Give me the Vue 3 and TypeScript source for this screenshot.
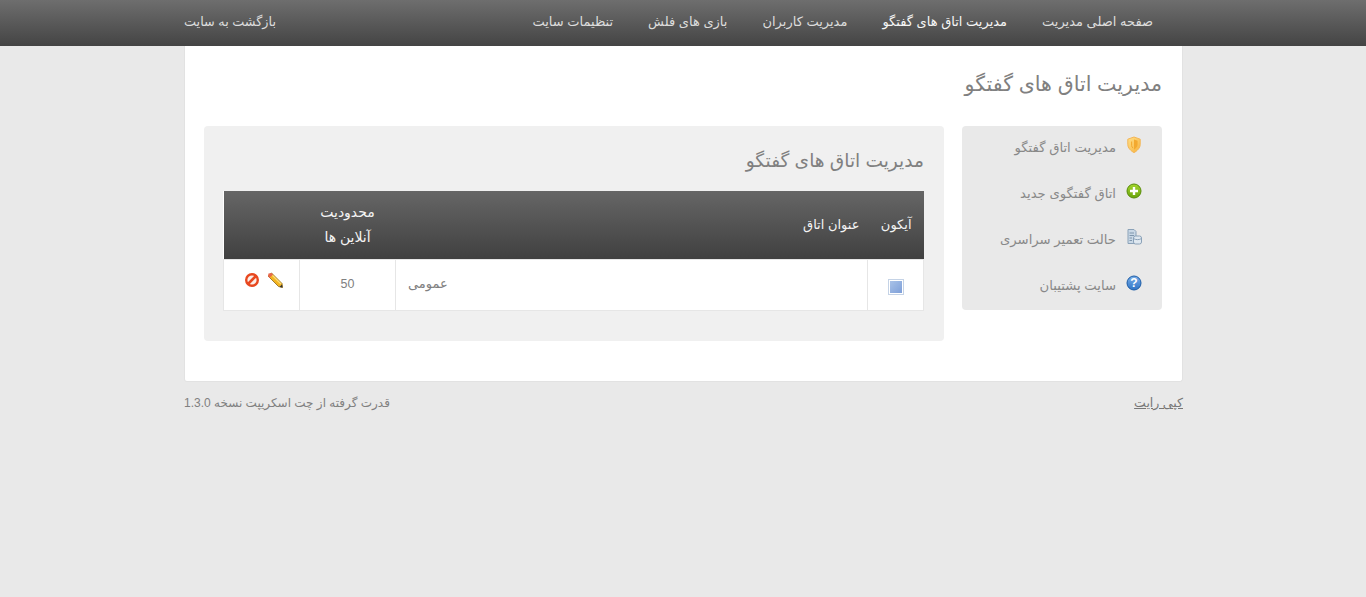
<script setup lang="ts">
const navItems = [
  { label: 'صفحه اصلی مدیریت', active: false },
  { label: 'مدیریت اتاق های گفتگو', active: true },
  { label: 'مدیریت کاربران', active: false },
  { label: 'بازی های فلش', active: false },
  { label: 'تنظیمات سایت', active: false },
]
const sideItems = [
  { label: 'مدیریت اتاق گفتگو', icon: 'shield' },
  { label: 'اتاق گفتگوی جدید', icon: 'plus' },
  { label: 'حالت تعمیر سراسری', icon: 'server' },
  { label: 'سایت پشتیبان', icon: 'help' },
]
</script>

<template>
  <div class="page" dir="rtl">
    <header class="topbar">
      <div class="wrap topbar-in">
        <nav class="nav">
          <a v-for="n in navItems" :key="n.label" :class="{ on: n.active }">{{ n.label }}</a>
        </nav>
        <a class="back">بازگشت به سایت</a>
      </div>
    </header>

    <div class="wrap">
      <main class="card">
        <h1>مدیریت اتاق های گفتگو</h1>
        <div class="cols">
          <aside class="side">
            <a v-for="s in sideItems" :key="s.label" class="side-item">
              <svg class="ico" width="16" height="18" viewBox="0 0 16 18">
                <defs>
                  <linearGradient id="g-green" x1="0" y1="0" x2="0" y2="1">
                    <stop offset="0" stop-color="#a4d62c"/>
                    <stop offset="1" stop-color="#6aa30c"/>
                  </linearGradient>
                  <linearGradient id="g-blue" x1="0" y1="0" x2="0" y2="1">
                    <stop offset="0" stop-color="#79aee8"/>
                    <stop offset="1" stop-color="#2f74c6"/>
                  </linearGradient>
                  <linearGradient id="g-gold" x1="0" y1="0" x2="1" y2="1">
                    <stop offset="0" stop-color="#ffe08a"/>
                    <stop offset="1" stop-color="#f7b23b"/>
                  </linearGradient>
                </defs>
                <template v-if="s.icon === 'shield'">
                  <path d="M8 1 L14.2 3.2 V8.5 C14.2 12 11 15 8 16.6 C5 15 1.8 12 1.8 8.5 V3.2 Z" fill="url(#g-gold)" stroke="#f4b555" stroke-width="1"/>
                  <path d="M8 3.5 L11.6 4.8 V8.5 C11.6 10.8 9.6 12.6 8 13.8 Z" fill="#f3a92f"/>
                  <path d="M5.6 5.5 V9.5 C5.6 10.5 6.2 11.4 7 12.1" fill="none" stroke="#f3a92f"/>
                </template>
                <template v-else-if="s.icon === 'plus'">
                  <circle cx="8" cy="9" r="7" fill="url(#g-green)" stroke="#588c08" stroke-width="1"/>
                  <path d="M8 5 V13 M4 9 H12" stroke="#fff" stroke-width="2.4"/>
                </template>
                <template v-else-if="s.icon === 'server'">
                  <path d="M2 1.5 H8 L10 3.5 V15.5 H2 Z" fill="#c9d8e6" stroke="#8ba2b8"/>
                  <path d="M3.5 5 H8 M3.5 7.5 H8 M3.5 10 H6 M3.5 12.5 H6" stroke="#7f96ac"/>
                  <rect x="7.5" y="8" width="8" height="8" rx="2" fill="#dfe8f0" stroke="#8ba2b8"/>
                  <path d="M7.5 10.5 C9.5 12 13.5 12 15.5 10.5" fill="none" stroke="#8ba2b8"/>
                </template>
                <template v-else>
                  <circle cx="8" cy="9" r="7" fill="url(#g-blue)" stroke="#1c5ca6" stroke-width="1"/>
                  <text x="8" y="13.2" class="q">?</text>
                </template>
              </svg>
              <span>{{ s.label }}</span>
            </a>
          </aside>

          <section class="panel">
            <h2>مدیریت اتاق های گفتگو</h2>
            <table>
              <thead>
                <tr>
                  <th class="c-icon">آیکون</th>
                  <th class="c-title">عنوان اتاق</th>
                  <th class="c-limit">محدودیت آنلاین ها</th>
                  <th class="c-act"></th>
                </tr>
              </thead>
              <tbody>
                <tr>
                  <td class="center">
                    <span class="room-ico"></span>
                  </td>
                  <td class="name">عمومی</td>
                  <td class="center num">50</td>
                  <td class="actions">
                    <div class="acts">
                      <svg width="16" height="16" viewBox="0 0 16 16">
                        <path d="M4.5 1 L15 11.5 L15.5 15.5 L11.5 14.5 L1 4 Z" fill="#f3b41f" stroke="#8a6414" stroke-width="0.8"/>
                        <path d="M1 4 L1.5 1.5 L4.5 1 L6 2.5 L2.5 6 Z" fill="#e8694c"/>
                        <path d="M5.5 3.5 L14 12" stroke="#fbdc7a" stroke-width="1.2"/>
                        <path d="M12.5 15 L15 12.5 L15.5 15.5 Z" fill="#333"/>
                      </svg>
                      <svg width="16" height="16" viewBox="0 0 16 16">
                        <circle cx="8" cy="8" r="5.8" fill="#fbeee8" stroke="#e8481f" stroke-width="2.4"/>
                        <path d="M4 12 L12 4" stroke="#e8481f" stroke-width="2.6"/>
                      </svg>
                    </div>
                  </td>
                </tr>
              </tbody>
            </table>
          </section>
        </div>
      </main>

      <footer class="foot">
        <a class="copy">کپی رایت</a>
        <span>قدرت گرفته از چت اسکریپت نسخه 1.3.0</span>
      </footer>
    </div>
  </div>
</template>

<style>
html, body { margin: 0; background: #e9e9e9; }
</style>

<style scoped>
.page {
  min-height: 597px;
  background: #e9e9e9;
  color: #777;
  font: 13px/20px "Liberation Sans", "DejaVu Sans", sans-serif;
}
.wrap { width: 1000px; margin: 0 auto; padding-left: 1px; box-sizing: border-box; }
.topbar { height: 46px; background: linear-gradient(#6e6e6e, #444); }
.topbar-in { display: flex; justify-content: space-between; align-items: center; height: 46px; padding-bottom: 2px; color: #ddd; }
.nav { display: flex; gap: 35px; padding-right: 30px; }
.nav a { color: #ddd; white-space: nowrap; }
.nav a.on { color: #f6f6f6; }
.back { color: #ddd; font-size: 12.8px; }

.card {
  background: #fff;
  border: 1px solid #e2e2e2;
  border-top: 0;
  border-radius: 0 0 3px 3px;
  height: 336px;
  box-sizing: border-box;
  padding: 0 20px 0 19px;
}
h1 { margin: 0; padding-top: 23px; height: 80px; box-sizing: border-box; font-size: 20.6px; line-height: 30px; font-weight: 400; color: #808080; }
.cols { display: flex; gap: 18px; align-items: flex-start; }
.side { width: 200px; height: 184px; box-sizing: border-box; background: #e9e9e9; border-radius: 4px; padding: 0 20px; flex: none; }
.side-item { display: flex; gap: 10px; height: 46px; align-items: center; color: #888; font-size: 13.2px; }
.side-item span { margin-top: -2px; }
.ico { flex: none; margin-top: -8px; }
.q { font: bold 12px "Liberation Sans", sans-serif; fill: #fff; text-anchor: middle; }
.panel { width: 740px; height: 215px; box-sizing: border-box; background: #f0f0f0; border-radius: 4px; padding: 20px; flex: none; }
h2 { margin: 0; height: 45px; font-size: 18.6px; line-height: 30px; font-weight: 400; color: #808080; }
table { width: 701px; border-collapse: collapse; table-layout: fixed; background: #fff; }
th { height: 68px; padding: 0 12px; background: linear-gradient(#666, #404040); color: #f4f4f4; font-weight: 400; text-align: right; }
td { height: 51px; padding: 0 12px 2px; box-sizing: border-box; border: 1px solid #e6e6e6; color: #808080; }
.c-icon { width: 56px; box-sizing: border-box; }
.c-title { padding-right: 8px; }
.c-limit { width: 96px; box-sizing: border-box; text-align: center; font-size: 14px; line-height: 25px; }
.c-act { width: 76px; box-sizing: border-box; }
.center { text-align: center; }
.name { text-align: left; }
.num { font-size: 12.5px; }
.room-ico { display: inline-block; width: 14px; height: 14px; box-sizing: border-box; background: linear-gradient(135deg, #a9c2e8, #7e9fd8); border: 1px solid #fff; outline: 1px solid #c5d3e6; vertical-align: middle; margin-top: 4px; }
.actions { padding: 0 16px 10px 0; }
.acts { display: flex; gap: 7px; }
.foot { display: flex; justify-content: space-between; padding-top: 11px; color: #808080; font-size: 12px; }
.copy { text-decoration: underline; color: #777; font-size: 12.5px; }
</style>
